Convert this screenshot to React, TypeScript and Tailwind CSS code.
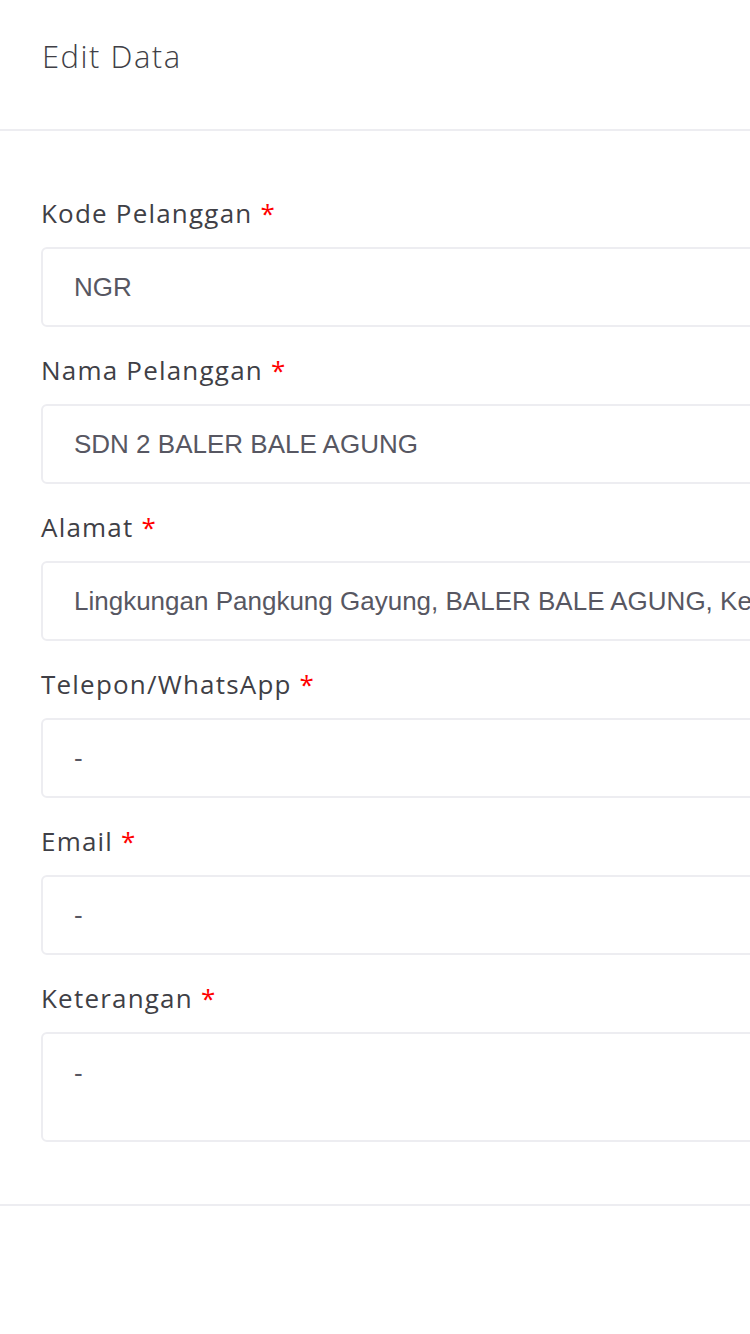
const fields = [
  { label: "Kode Pelanggan", value: "NGR" },
  { label: "Nama Pelanggan", value: "SDN 2 BALER BALE AGUNG" },
  { label: "Alamat", value: "Lingkungan Pangkung Gayung, BALER BALE AGUNG, Kec. Negara, Kabupaten Jembrana, Bali" },
  { label: "Telepon/WhatsApp", value: "-" },
  { label: "Email", value: "-" },
];

export default function App() {
  return (
    <div className="w-[750px] min-h-[1334px] overflow-hidden bg-white">
      <div className="w-[1100px]">
        <div className="h-[131px] border-b-2 border-[#ededf1] px-[42px] pt-[34px]">
          <h1 className="text-[31px] leading-[45px] tracking-[1.5px] font-light text-[#3f3f46] font-['Open_Sans',sans-serif]">
            Edit Data
          </h1>
        </div>

        <div className="px-[41px] pt-[63px] pb-[38px] border-b-2 border-[#ededf1]">
          {fields.map((f) => (
            <div key={f.label} className="mb-[24px]">
              <label className="block mb-[15px] text-[26px] leading-[38px] tracking-[1.2px] text-[#3f3f46] font-['Open_Sans',sans-serif]">
                {f.label} <span className="text-[#ff0000]">*</span>
              </label>
              <div className="h-[80px] border-2 border-[#ededf1] rounded-[6px] px-[31px] flex items-center whitespace-nowrap overflow-hidden text-[26px] text-[#575762] font-['Liberation_Sans',Arial,sans-serif]">
                {f.value}
              </div>
            </div>
          ))}
          <div className="mb-[24px]">
            <label className="block mb-[15px] text-[26px] leading-[38px] tracking-[1.2px] text-[#3f3f46] font-['Open_Sans',sans-serif]">
              Keterangan <span className="text-[#ff0000]">*</span>
            </label>
            <div className="h-[110px] border-2 border-[#ededf1] rounded-[6px] px-[31px] pt-[20px] text-[26px] leading-[39px] text-[#575762] font-['Liberation_Sans',Arial,sans-serif]">
              -
            </div>
          </div>
        </div>
      </div>
    </div>
  );
}
